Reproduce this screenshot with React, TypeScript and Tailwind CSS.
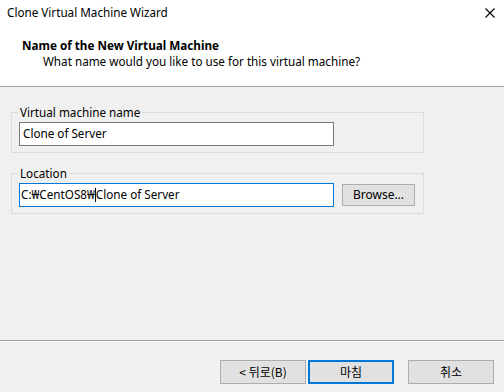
const font = "font-['Noto_Sans','Noto_Sans_CJK_KR',sans-serif]";
const kr = "font-['Noto_Sans_CJK_KR',sans-serif]";

function GroupBox({ label, children }: { label: string; children: React.ReactNode }) {
  return (
    <fieldset className="mx-[11px] w-[413px] border border-[#dcdcdc] px-[7px] pb-[6px]">
      <legend className="ml-[-1px] px-[2px] text-[11.7px] leading-[16px] text-black">{label}</legend>
      <div className="mt-[2px] flex items-center gap-[8px]">{children}</div>
    </fieldset>
  );
}

function WinButton({ label, primary, className = '' }: { label: string; primary?: boolean; className?: string }) {
  return (
    <button
      className={`flex items-center justify-center bg-[#e1e1e1] text-[12px] text-black ${
        primary ? 'border-2 border-[#0078d7]' : 'border border-[#adadad]'
      } ${className}`}
    >
      {label}
    </button>
  );
}

export default function App() {
  return (
    <div className={`flex h-[392px] w-[504px] flex-col bg-[#f0f0f0] ${font}`}>
      {/* header */}
      <div className="h-[87px] border-b border-[#a0a0a0] bg-white">
        <div className="flex h-[26px] items-center justify-between pl-[7px] pr-[7px]">
          <span className="text-[11.7px] text-black">Clone Virtual Machine Wizard</span>
          <svg width="10" height="10" viewBox="0 0 10 10" className="mr-[2px]">
            <path d="M0.5 0.5 L9.5 9.5 M9.5 0.5 L0.5 9.5" stroke="#000" strokeWidth="1.1" />
          </svg>
        </div>
        <div className="pl-[22px] pt-[11px]">
          <div className="text-[11.7px] font-bold leading-[16px] text-black">Name of the New Virtual Machine</div>
          <div className="pl-[21px] text-[11.7px] leading-[16px] text-black">
            What name would you like to use for this virtual machine?
          </div>
        </div>
      </div>

      {/* body */}
      <div className="flex flex-1 flex-col gap-[12px] pt-[17px]">
        <GroupBox label="Virtual machine name">
          <div className="flex h-[24px] w-[315px] items-center border border-[#7a7a7a] bg-white pl-[3px] text-[11.7px]">
            Clone of Server
          </div>
        </GroupBox>
        <GroupBox label="Location">
          <div className="flex h-[24px] w-[315px] items-center border border-[#0078d7] bg-white pl-[1px] text-[11.7px]">
            <span>C:₩CentOS8₩</span>
            <span className="h-[14px] w-[1px] bg-black" />
            <span>Clone of Server</span>
          </div>
          <WinButton label="Browse..." className="h-[22px] w-[73px] text-[11.7px]" />
        </GroupBox>
      </div>

      {/* footer */}
      <div className="flex h-[52px] border-t border-[#a0a0a0]">
        <div className="flex flex-1 items-start justify-end border-t border-white pr-[10px] pt-[18px]">
          <WinButton label="< 뒤로(B)" className={`h-[24px] w-[86px] ${kr}`} />
          <WinButton label="마침" primary className={`ml-[2px] h-[24px] w-[86px] ${kr}`} />
          <WinButton label="취소" className={`ml-[14px] h-[24px] w-[86px] ${kr}`} />
        </div>
      </div>
    </div>
  );
}
